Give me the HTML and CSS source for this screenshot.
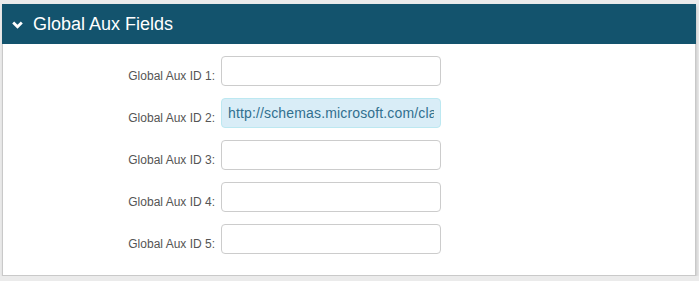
FILE: index.html
```html
<!DOCTYPE html>
<html lang="en">
<head>
  <meta charset="UTF-8" />
  <title>Global Aux Fields</title>
  <link rel="stylesheet" href="styles.css">
</head>
<body>

  <div class="panel">
    <div class="panel-heading">
      <svg class="chevron" width="11" height="8" viewBox="0 0 11 8">
        <path d="M1.2 1.6 L5.5 5.8 L9.8 1.6" fill="none" stroke="#fff" stroke-width="2.8" />
      </svg>
      <span>Global Aux Fields</span>
    </div>
    <div class="panel-body">
      <div class="form-row">
        <label>Global Aux ID 1:</label>
        <input type="text" value="">
      </div>
      <div class="form-row">
        <label>Global Aux ID 2:</label>
        <input type="text" class="filled" value="http://schemas.microsoft.com/claims/identity">
      </div>
      <div class="form-row">
        <label>Global Aux ID 3:</label>
        <input type="text" value="">
      </div>
      <div class="form-row">
        <label>Global Aux ID 4:</label>
        <input type="text" value="">
      </div>
      <div class="form-row">
        <label>Global Aux ID 5:</label>
        <input type="text" value="">
      </div>
    </div>
  </div>

</body>
</html>
```

FILE: styles.css
```css
body {
  margin: 0;
  padding: 4px 3px 0 2px;
  background: #ebebeb;
  font-family: 'Liberation Sans', Arial, sans-serif;
}

.panel {
  background: #fff;
  border: 1px solid #c9c9c9;
  border-top: none;
  box-shadow: 1px 2px 3px rgba(0, 0, 0, 0.15);
}

.panel-heading {
  background: #13536d;
  color: #fff;
  height: 40px;
  display: flex;
  align-items: center;
  padding-left: 10px;
  font-size: 18px;
  margin: 0 -1px 0 -1px;
}

.chevron {
  margin-right: 10px;
  margin-top: 1px;
}

.panel-body {
  padding: 12px 0 21px 0;
  display: flex;
  flex-direction: column;
  gap: 12px;
}

.form-row {
  display: flex;
  align-items: flex-start;
}

.form-row label {
  width: 218px;
  text-align: right;
  padding-right: 6px;
  padding-top: 13px;
  font-size: 12px;
  color: #555;
  box-sizing: border-box;
}

.form-row input {
  width: 220px;
  height: 30px;
  box-sizing: border-box;
  border: 1px solid #ccc;
  border-radius: 4px;
  padding: 0 6px;
  font-family: 'Liberation Sans', Arial, sans-serif;
  font-size: 14px;
  letter-spacing: 0.15px;
  color: #555;
  background: #fff;
}

.form-row input.filled {
  background: #d9edf7;
  border-color: #bce8f1;
  color: #31708f;
}
```
